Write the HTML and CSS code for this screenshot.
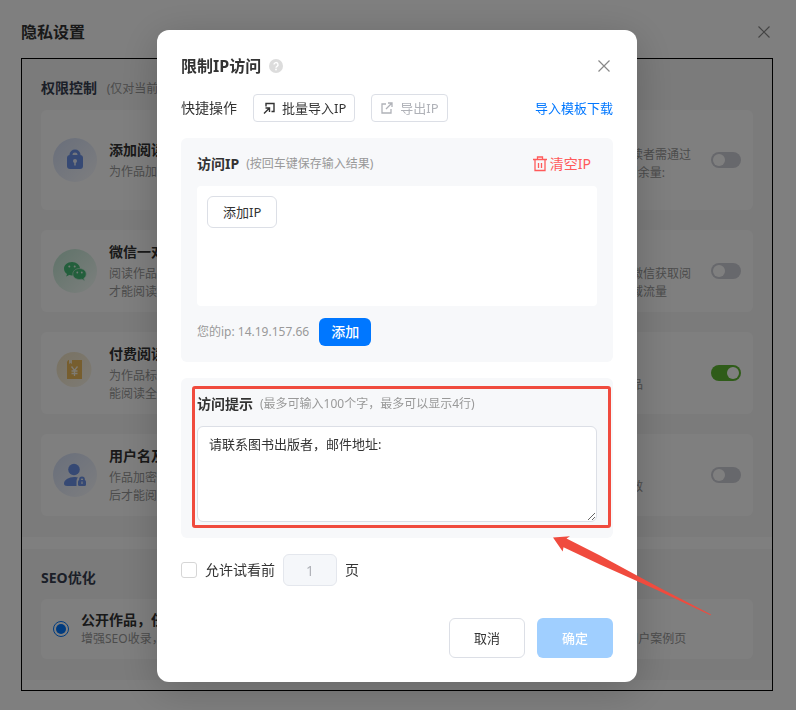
FILE: index.html
```html
<!DOCTYPE html>
<html lang="zh-CN">
<head>
  <meta charset="UTF-8">
  <title>隐私设置</title>
  <link rel="stylesheet" href="styles.css">
</head>
<body>

  <div class="page">
    <header class="page-header">
      <h1>隐私设置</h1>
      <button class="close-btn" type="button" aria-label="关闭">
        <svg width="12" height="12" viewBox="0 0 12 12"><path d="M.5.5l11 11M11.5.5l-11 11"/></svg>
      </button>
    </header>

    <main class="frame">
      <section class="group">
        <h2>权限控制 <small>(仅对当前作品生效)</small></h2>

        <div class="card card-tall">
          <svg class="card-icon" viewBox="0 0 44 44">
            <defs>
              <linearGradient id="blue" x1="0" y1="0" x2="1" y2="1">
                <stop offset="0" stop-color="#d3def6"/>
                <stop offset="1" stop-color="#fbfcff"/>
              </linearGradient>
            </defs>
            <circle cx="22" cy="22" r="22" fill="url(#blue)"/>
            <path d="M18 18v-1.500a4 3.500 0 0 1 8 0V18" fill="none" stroke="#6d93e8" stroke-width="3"/>
            <rect x="14" y="17" width="16" height="14" rx="3" fill="#6d93e8"/>
            <circle cx="22" cy="23" r="2" fill="#e9effc"/>
            <path d="M22 23v4.500" stroke="#e9effc" stroke-width="1.500"/>
          </svg>
          <div class="card-text">
            <h3>添加阅读密码</h3>
            <p>为作品加密，输入密码后才能阅读</p>
          </div>
          <p class="card-note">开启密码功能后，读者需通过<br>密码验证，短信1剩余量:</p>
          <input class="switch" type="checkbox" aria-label="添加阅读密码">
        </div>

        <div class="card">
          <svg class="card-icon" viewBox="0 0 44 44">
            <defs>
              <linearGradient id="green" x1="0" y1="0" x2="1" y2="1">
                <stop offset="0" stop-color="#bfe6d2"/>
                <stop offset="1" stop-color="#fafffc"/>
              </linearGradient>
            </defs>
            <circle cx="22" cy="22" r="22" fill="url(#green)"/>
            <path d="M19 13c-4.700 0-8 3-8 6.700 0 2.200 1.200 4 3 5.300l-.8 2.500 3-1.500c.9.3 1.800.4 2.800.4 4.500 0 8-3 8-6.700S23.500 13 19 13z" fill="#47bf78"/>
            <path d="M26.500 19.500c-3.800 0-6.700 2.400-6.700 5.500s2.900 5.500 6.700 5.500c.8 0 1.600-.1 2.300-.3l2.700 1.400-.7-2.200c1.500-1 2.400-2.600 2.400-4.400 0-3.100-2.900-5.500-6.700-5.500z" fill="#47bf78" stroke="#c9ead8" stroke-width=".7"/>
            <circle cx="16.300" cy="17.500" r="1" fill="#e4f6ec"/>
            <circle cx="21.700" cy="17.500" r="1" fill="#e4f6ec"/>
            <circle cx="24.300" cy="23.500" r=".9" fill="#e4f6ec"/>
            <circle cx="28.800" cy="23.500" r=".9" fill="#e4f6ec"/>
          </svg>
          <div class="card-text">
            <h3>微信一对一阅读授权</h3>
            <p>阅读作品时需使用微信扫码，获得授权后<br>才能阅读全部内容</p>
          </div>
          <p class="card-note">授权之后，可通过微信获取阅<br>读者信息，沉淀私域流量</p>
          <input class="switch" type="checkbox" aria-label="微信一对一阅读授权">
        </div>

        <div class="card">
          <svg class="card-icon" viewBox="0 0 44 44">
            <defs>
              <linearGradient id="gold" x1="0" y1="0" x2="1" y2="1">
                <stop offset="0" stop-color="#f2e4c4"/>
                <stop offset="1" stop-color="#fbf6ea"/>
              </linearGradient>
            </defs>
            <circle cx="21" cy="18.500" r="17.500" fill="url(#gold)"/>
            <path d="M15.500 9H29v19H14V10.500z" fill="#eebd5c"/>
            <path d="M16 9h3v4l-1.500-1L16 13z" fill="#faefd5"/>
            <path d="M18.500 15.500l3 4 3-4M21.500 19.500V25M18.500 20h6M18.500 22.500h6" fill="none" stroke="#fdf6e6" stroke-width="1.300"/>
          </svg>
          <div class="card-text">
            <h3>付费阅读</h3>
            <p>为作品标价，读者支付相应的费用之后才<br>能阅读全部内容</p>
          </div>
          <p class="card-note">适用于付费类的作品</p>
          <input class="switch" type="checkbox" aria-label="付费阅读" checked>
        </div>

        <div class="card">
          <svg class="card-icon" viewBox="0 0 44 44">
            <circle cx="22" cy="22" r="22" fill="url(#blue)"/>
            <circle cx="21" cy="16.500" r="5.800" fill="#6d93e8"/>
            <path d="M23.500 24.200c-6.500-1-12.500 2.300-12.500 6.300 0 1.800 1.500 2.500 3 2.500h9.500v-4.500c0-1.500.5-3 1.500-4z" fill="#6d93e8"/>
            <path d="M27 28v-1.500a2 2 0 0 1 4 0V28" fill="none" stroke="#6d93e8" stroke-width="1.800"/>
            <rect x="25" y="27" width="8" height="6" rx="1.500" fill="#6d93e8"/>
            <path d="M29 28.500v2.500" stroke="#e9effc" stroke-width="1.200"/>
          </svg>
          <div class="card-text">
            <h3>用户名及密码</h3>
            <p>作品加密后，读者需要输入用户名和密码<br>后才能阅读全部内容</p>
          </div>
          <p class="card-note">对当前的作品都有效</p>
          <input class="switch" type="checkbox" aria-label="用户名及密码">
        </div>
      </section>

      <section class="group">
        <h2>SEO优化</h2>
        <div class="card card-radio">
          <input class="radio" type="radio" name="seo" id="seo-public" checked>
          <label class="card-text" for="seo-public">
            <strong>公开作品，任何人都可以查看</strong>
            <span>增强SEO收录，作品可以被搜索引擎收录，提升品牌的曝光和影响力，优质作品还有机会被推荐到了VIP用户案例页</span>
          </label>
        </div>
      </section>
    </main>
  </div>

  <div class="overlay">
    <div class="modal" role="dialog" aria-labelledby="modal-title">
      <header class="modal-header">
        <h2 id="modal-title">限制IP访问</h2>
        <svg class="help" width="14" height="14" viewBox="0 0 14 14">
          <circle cx="7" cy="7" r="7" fill="#dcdcdc"/>
          <path d="M5 5.600a2 2 0 1 1 3 1.700c-.7.4-1 .7-1 1.400" fill="none" stroke="#fff" stroke-width="1.400"/>
          <circle cx="7" cy="10.500" r=".9" fill="#fff"/>
        </svg>
        <button class="close-btn" type="button" aria-label="关闭">
          <svg width="12" height="12" viewBox="0 0 12 12"><path d="M.5.5l11 11M11.5.5l-11 11"/></svg>
        </button>
      </header>

      <div class="actions">
        <span class="actions-label">快捷操作</span>
        <button class="btn btn-small" type="button">
          <svg width="12" height="12" viewBox="0 0 12 12"><path d="M3 4.500V1.500h8v8H8.500M1 11.500l5-5M2.500 6H6.500V10" fill="none" stroke="currentColor" stroke-width="1.400"/></svg>
          批量导入IP
        </button>
        <button class="btn btn-small" type="button" disabled>
          <svg width="12" height="12" viewBox="0 0 12 12"><path d="M5 2H1v9h9V7M5 7l5.500-5.500M7 1h4v4" fill="none" stroke="currentColor" stroke-width="1.300"/></svg>
          导出IP
        </button>
        <a class="template-link" href="#">导入模板下载</a>
      </div>

      <section class="panel">
        <div class="panel-title">
          <h3>访问IP</h3>
          <small>(按回车键保存输入结果)</small>
          <button class="clear-btn" type="button">
            <svg width="14" height="16" viewBox="0 0 14 16"><path d="M0 3.500h14M4.500 3V1h5v2M2 4v10.500h10V4M5.500 7v5M8.500 7v5" fill="none" stroke="currentColor" stroke-width="1.300"/></svg>
            清空IP
          </button>
        </div>
        <div class="ip-list">
          <button class="btn btn-add" type="button">添加IP</button>
        </div>
        <div class="my-ip">
          <span>您的ip: 14.19.157.66</span>
          <button class="btn-blue" type="button">添加</button>
        </div>
      </section>

      <section class="panel panel-tip">
        <div class="panel-title">
          <h3><label for="tip">访问提示</label></h3>
          <small>(最多可输入100个字，最多可以显示4行)</small>
        </div>
        <textarea id="tip">请联系图书出版者，邮件地址:</textarea>
        <div class="mark"></div>
        <svg class="arrow" width="160" height="80" viewBox="0 0 160 80">
          <path d="M0 1.500L17 .2l-3.500 2.300L47 19.500l60 32.500 51 26.500-.5.700L104 54 47 28.500 10.500 11.200 9.700 15.500z" fill="#f04b3e"/>
        </svg>
      </section>

      <div class="preview">
        <input type="checkbox" id="allow-preview">
        <label for="allow-preview">允许试看前</label>
        <input class="page-count" type="text" value="1" aria-label="试看页数" disabled>
        <span>页</span>
      </div>

      <footer class="modal-footer">
        <button class="btn btn-large" type="button">取消</button>
        <button class="btn-blue btn-large" type="button" disabled>确定</button>
      </footer>
    </div>
  </div>

</body>
</html>
```

FILE: styles.css
```css
:root {
  --blue: #0077ff;
  --text: #333;
  --muted: #999;
  --border: #dcdfe6;
  --panel: #f7f8fa;
  --red: #f04b3e;
}

* {
  box-sizing: border-box;
}

body {
  margin: 0;
  background: #fff;
  color: var(--text);
  font-family: "Noto Sans", "Noto Sans CJK SC", sans-serif;
  font-size: 14px;
  line-height: 20px;
}

h1, h2, h3, p {
  margin: 0;
}

button, input, textarea {
  margin: 0;
  font: inherit;
}

small {
  color: var(--muted);
  font-size: 12px;
  font-weight: normal;
}

/* page behind the dialog */
.page {
  padding: 0 23px 19px 21px;
}

.page-header {
  display: flex;
  align-items: center;
  justify-content: space-between;
  height: 58px;
  padding-top: 5px;
}

.page-header h1 {
  font-size: 16px;
}

.close-btn {
  display: flex;
  padding: 3px;
  border: 0;
  background: none;
}

.close-btn path {
  fill: none;
  stroke: #888;
  stroke-width: 1.2;
}

.frame {
  display: flex;
  flex-direction: column;
  gap: 12px;
  padding-bottom: 10px;
  border: 1px solid #000;
}

.group {
  display: flex;
  flex-direction: column;
  gap: 20px;
  padding: 18px 19px 21px;
  background: #f7f7f7;
}

.group h2 {
  margin-bottom: -10px;
  color: #363e50;
  font-size: 14px;
  line-height: 22px;
}

.group h2 small {
  margin-left: 6px;
}

.card {
  display: flex;
  align-items: center;
  gap: 12px;
  padding: 11px 12px;
  border-radius: 6px;
  background: #fff;
  white-space: nowrap;
}

.card-tall {
  min-height: 100px;
}

.card-icon {
  flex: none;
  width: 44px;
  height: 44px;
}

.card-text {
  flex: 1;
  min-width: 0;
}

.card h3 {
  margin-bottom: 2px;
  font-size: 14px;
  line-height: 22px;
}

.card p,
.card-text span {
  color: var(--muted);
  font-size: 12px;
  line-height: 18px;
}

.card .card-note {
  flex: none;
  width: 156px;
  margin-right: 8px;
  padding-top: 24px;
}

.card-tall .card-note {
  padding-top: 8px;
}

.card-radio .card-text strong,
.card-radio .card-text span {
  display: block;
}

.switch {
  position: relative;
  flex: none;
  width: 30px;
  height: 16px;
  border-radius: 8px;
  background: #cfd0d8;
  appearance: none;
}

.switch::before {
  content: "";
  position: absolute;
  top: 2px;
  left: 2px;
  width: 12px;
  height: 12px;
  border-radius: 50%;
  background: #fff;
}

.switch:checked {
  background: #5fb832;
}

.switch:checked::before {
  left: 16px;
}

.radio {
  flex: none;
  width: 16px;
  height: 16px;
  padding: 2px;
  border: 1px solid var(--blue);
  border-radius: 50%;
  background: var(--blue) content-box;
  appearance: none;
}

/* dialog */
.overlay {
  position: fixed;
  inset: 0;
  display: flex;
  align-items: flex-start;
  justify-content: center;
  padding: 30px 2px 0 0;
  background: rgba(0, 0, 0, 0.5);
}

.modal {
  width: 480px;
  padding: 24px;
  border-radius: 12px;
  background: #fff;
  box-shadow: 0 8px 40px rgba(0, 0, 0, 0.2);
}

.modal-header {
  display: flex;
  align-items: center;
  gap: 8px;
  height: 24px;
}

.modal-header h2 {
  font-size: 16px;
}

.modal-header .close-btn {
  margin-left: auto;
}

.actions {
  display: flex;
  align-items: center;
  gap: 16px;
  margin: 16px 0;
}

.btn {
  border: 1px solid var(--border);
  border-radius: 6px;
  background: #fff;
  color: var(--text);
  font-size: 13px;
}

.btn-small {
  display: flex;
  align-items: center;
  gap: 7px;
  height: 28px;
  padding: 0 8px 0 9px;
  border-radius: 4px;
}

.btn:disabled {
  color: #b0b2b8;
}

.template-link {
  margin-left: auto;
  color: var(--blue);
  font-size: 13px;
  text-decoration: none;
}

.panel {
  position: relative;
  margin-bottom: 16px;
  padding: 12px 16px 16px;
  border-radius: 6px;
  background: var(--panel);
}

.panel-title {
  display: flex;
  align-items: center;
  gap: 7px;
  height: 28px;
  margin-bottom: 8px;
}

.panel-title h3 {
  font-size: 14px;
}

.clear-btn {
  display: flex;
  align-items: center;
  gap: 3px;
  margin-left: auto;
  padding: 0 6px;
  border: 0;
  background: none;
  color: #ff5a5a;
}

.ip-list {
  min-height: 120px;
  margin-bottom: 12px;
  padding: 10px;
  border-radius: 4px;
  background: #fff;
}

.btn-add {
  height: 32px;
  padding: 0 15px;
}

.my-ip {
  display: flex;
  align-items: center;
  gap: 10px;
  color: var(--muted);
  font-size: 12px;
}

.btn-blue {
  height: 28px;
  padding: 0 12px;
  border: 0;
  border-radius: 6px;
  background: var(--blue);
  color: #fff;
  font-size: 14px;
  font-weight: 500;
}

.btn-blue:disabled {
  background: #a0cfff;
}

.panel-tip textarea {
  display: block;
  width: 100%;
  height: 96px;
  padding: 7px 11px;
  border: 1px solid var(--border);
  border-radius: 6px;
  background: #fff;
  color: var(--text);
  font-size: 13px;
  resize: vertical;
}

/* red frame and arrow over the tip panel */
.mark {
  position: absolute;
  inset: 8px 2px 10px 11px;
  border: 3px solid var(--red);
  border-radius: 3px;
  pointer-events: none;
}

.arrow {
  position: absolute;
  top: 158px;
  left: 372px;
  pointer-events: none;
}

.preview {
  display: flex;
  align-items: center;
  gap: 8px;
}

.preview input[type="checkbox"] {
  width: 16px;
  height: 16px;
  border: 1px solid #d6d6d6;
  border-radius: 3px;
  background: #fff;
  appearance: none;
}

.page-count {
  width: 54px;
  height: 32px;
  padding: 0;
  border: 1px solid #e4e7ed;
  border-radius: 6px;
  background: #f5f7fa;
  color: #b0b2b8;
  text-align: center;
}

.modal-footer {
  display: flex;
  justify-content: flex-end;
  gap: 12px;
  margin-top: 32px;
}

.btn-large {
  width: 76px;
  height: 40px;
  font-size: 13px;
}
```
